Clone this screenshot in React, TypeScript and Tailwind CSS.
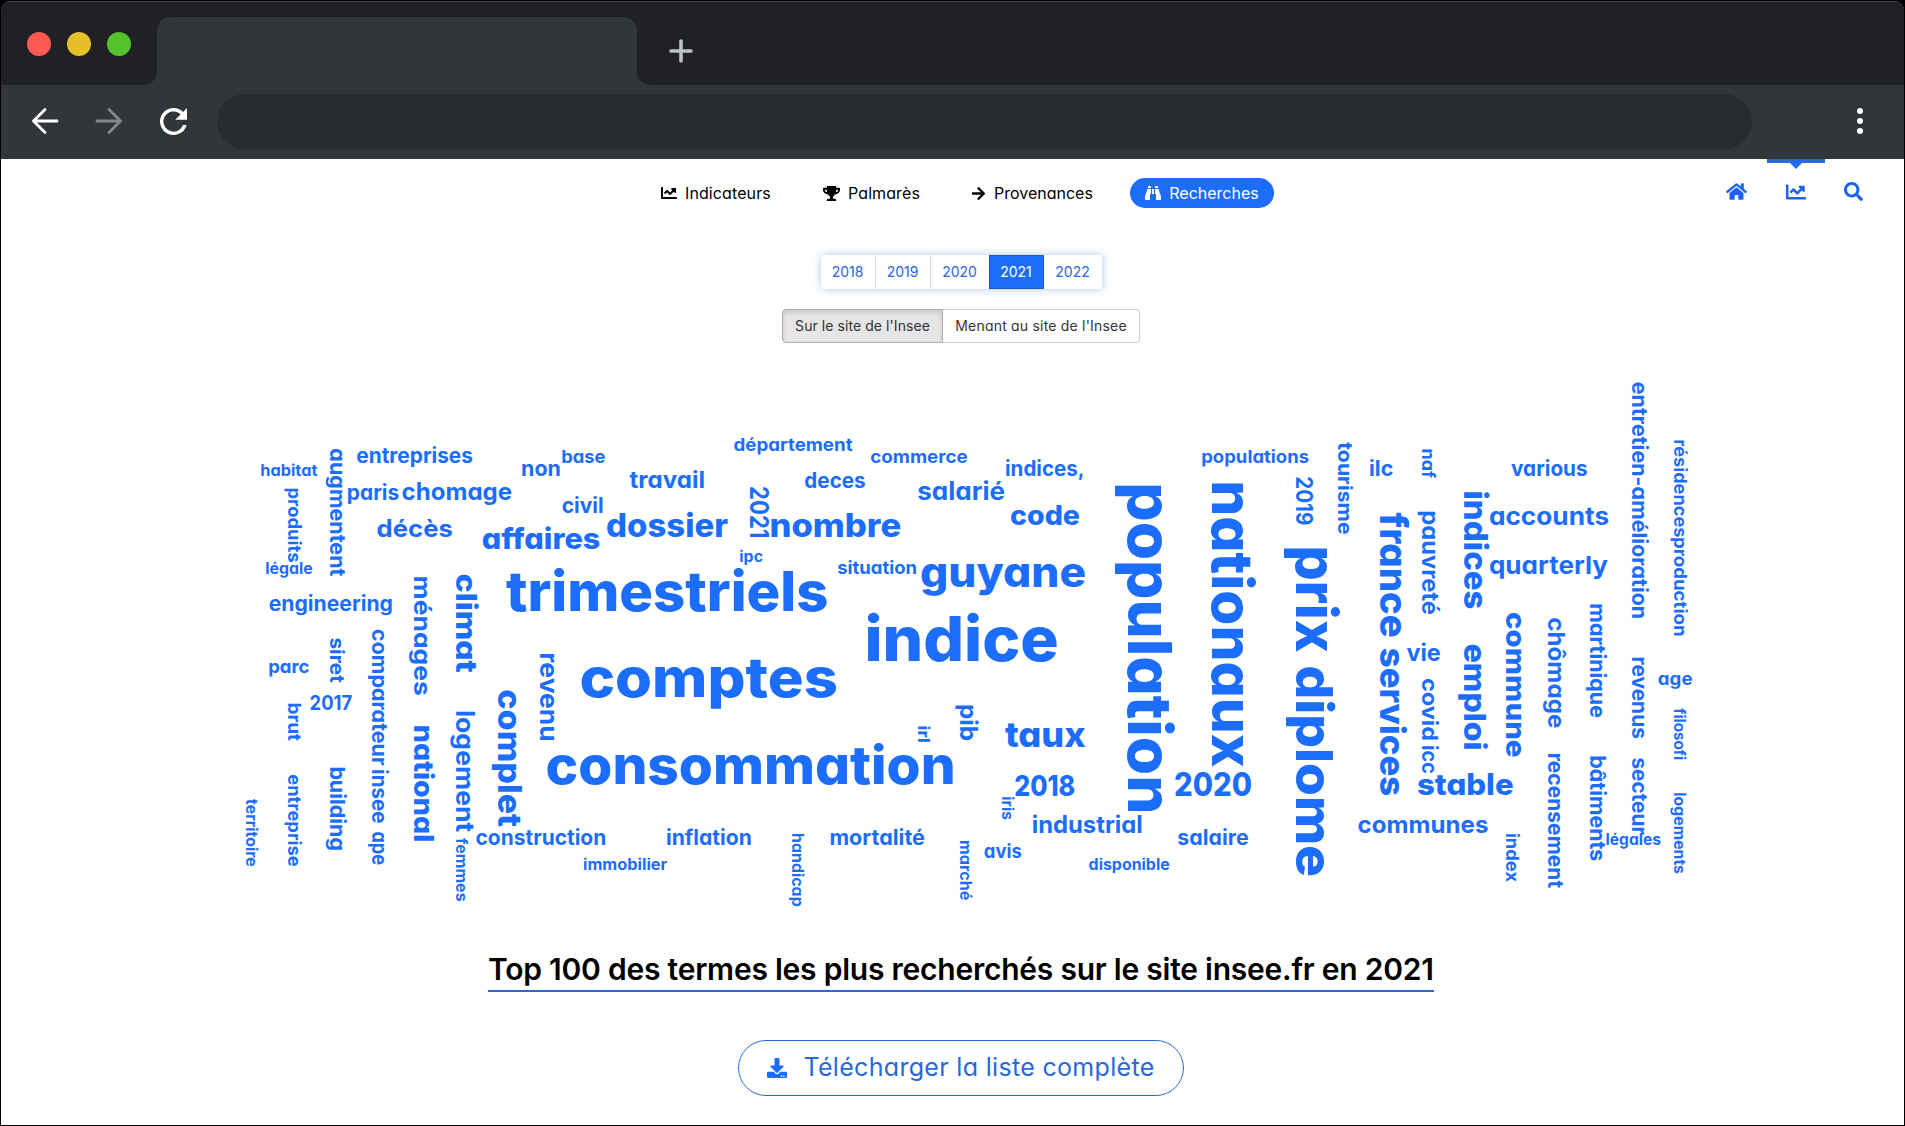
import React from "react";
import { FaArrowRight, FaBinoculars, FaChartLine, FaDownload, FaHome, FaSearch, FaTrophy } from "react-icons/fa";

type Word = [text: string, size: number, start: number, end: number, baseline: number];

const horizontal: Word[] = [
  ["entreprises", 21, 357.3, 472, 462.7],
  ["habitat", 16, 261, 316.7, 476],
  ["paris", 21, 347.7, 398.3, 500],
  ["chomage", 24, 402.7, 511, 500],
  ["non", 21, 522, 560, 475.7],
  ["base", 18, 562, 604.7, 462.7],
  ["civil", 21, 562.7, 602.7, 512.7],
  ["décès", 24, 377.7, 451.7, 536.7],
  ["affaires", 29, 483, 599, 549.3],
  ["dossier", 32, 607.5, 726.7, 536.7],
  ["légale", 15.5, 266, 312, 574.3],
  ["engineering", 21, 269.7, 392, 610.7],
  ["trimestriels", 55, 508.5, 826, 611],
  ["parc", 18.5, 269, 308.7, 673.3],
  ["2017", 20, 310.5, 351.3, 710],
  ["construction", 21, 476.5, 605.3, 844.7],
  ["immobilier", 15.5, 583.7, 666.5, 870],
  ["travail", 23, 630.5, 704, 488],
  ["département", 18, 734.3, 851.7, 451],
  ["commerce", 18, 871, 967, 463],
  ["deces", 21, 805.3, 864.7, 488],
  ["salarié", 25, 918.3, 1004, 500],
  ["indices,", 21, 1006, 1083.7, 475.7],
  ["code", 27, 1011.3, 1078.7, 524.7],
  ["nombre", 32, 771, 899.7, 536.7],
  ["ipc", 15.5, 740, 762.3, 562],
  ["situation", 18, 838, 916.3, 573.7],
  ["guyane", 41, 921.8, 1084.2, 586.7],
  ["indice", 62, 867.2, 1056, 660.7],
  ["comptes", 55, 582, 835.5, 696.7],
  ["taux", 35, 1006.5, 1084, 746.7],
  ["consommation", 53, 548, 953.2, 784],
  ["2018", 28, 1015.5, 1074, 796],
  ["industrial", 24, 1032.8, 1141.7, 832.7],
  ["inflation", 21, 666.9, 750.9, 844.7],
  ["mortalité", 21, 830.4, 924, 844.7],
  ["avis", 19, 984.7, 1021, 858],
  ["disponible", 15.5, 1089.3, 1169, 870],
  ["populations", 18, 1202, 1308.3, 463],
  ["ilc", 21, 1370, 1392.3, 475.7],
  ["2020", 32, 1175.5, 1250.5, 795.7],
  ["salaire", 21, 1178.3, 1247.7, 845],
  ["communes", 24, 1358.7, 1487.3, 832.7],
  ["various", 21, 1512, 1586.7, 476],
  ["accounts", 24.5, 1490, 1608, 524.7],
  ["quarterly", 24.5, 1490, 1607, 573.7],
  ["vie", 24, 1407.5, 1439.7, 660.7],
  ["stable", 29.5, 1418.3, 1512.3, 795.3],
  ["age", 18, 1658.7, 1691.7, 684.7],
  ["légales", 15.5, 1606.3, 1660.3, 845],
];

const vertical: Word[] = [
  ["augmentent", 21, 449.3, 575.5, 330],
  ["produits", 18.5, 488.3, 561.7, 288],
  ["ménages", 24, 576.7, 694.7, 414.3],
  ["climat", 29, 575, 671.5, 456],
  ["siret", 20, 638.3, 682, 330],
  ["comparateur", 20.5, 630, 764.7, 371.7],
  ["insee", 20.5, 770, 822.7, 371.7],
  ["ape", 20.5, 832.3, 864.3, 371.7],
  ["revenu", 25, 653.3, 740.7, 540],
  ["brut", 18, 703.3, 740.2, 288],
  ["entreprise", 18, 775, 866, 288],
  ["building", 20.5, 767.3, 850, 330],
  ["national", 27, 726, 841, 414.3],
  ["logement", 25, 711, 831.2, 456],
  ["complet", 32, 690.7, 825.7, 498],
  ["femmes", 15.5, 838.8, 901, 456],
  ["territoire", 15.5, 799.8, 866, 246],
  ["2021", 25, 487.2, 537.5, 750],
  ["irl", 16.5, 726.3, 742, 917.7],
  ["pib", 24, 705, 740, 960],
  ["iris", 15.5, 797, 819.3, 1001.7],
  ["handicap", 15.5, 833.7, 906, 791.6],
  ["marché", 15.5, 840.7, 899.7, 960],
  ["2019", 22.5, 477.2, 524.3, 1296],
  ["tourisme", 20, 443.2, 533.7, 1338.3],
  ["population", 61, 485, 811.7, 1127.7],
  ["nationaux", 56, 482.7, 765, 1211.7],
  ["prix", 56, 548, 650, 1296],
  ["diplome", 51, 667.7, 874.7, 1296],
  ["france", 38, 514.3, 636, 1380],
  ["services", 35, 649.3, 794.7, 1380],
  ["naf", 17, 449.3, 477.5, 1421.7],
  ["pauvreté", 22.5, 511.3, 614, 1421.7],
  ["indices", 32.5, 492, 608, 1464],
  ["entretien-amélioration", 20.5, 382.7, 618.3, 1631.7],
  ["résidences", 17.5, 440, 536.7, 1673.7],
  ["production", 17.5, 537.7, 635.7, 1673.7],
  ["covid", 22, 679, 740, 1421.7],
  ["icc", 20.5, 746, 773, 1421.7],
  ["emploi", 30, 645, 749.3, 1464],
  ["commune", 27.5, 613.3, 756.3, 1506],
  ["chômage", 23, 618.3, 727.3, 1547.7],
  ["martinique", 21, 604.3, 717, 1589.7],
  ["revenus", 20.5, 657.3, 738, 1631.7],
  ["filosofi", 15.5, 709, 759.3, 1673.7],
  ["recensement", 21, 753.7, 887.2, 1547.7],
  ["bâtiments", 21, 756.3, 860.3, 1589.7],
  ["secteur", 20.5, 758.3, 834, 1631.7],
  ["logements", 15.5, 793, 873.3, 1673.7],
  ["index", 18, 833.7, 881.2, 1506],
];

/** Side bearing of the glyphs, as a share of the font size. */
const BEARING = 0.045;

/** Large words carry a heavier weight than the small ones. */
const weightOf = (size: number) => (size >= 27 ? 800 : 700);

function WordCloud() {
  return (
    <svg
      viewBox="200 370 1510 550"
      className="h-[550px] w-[1510px] fill-[#1c6dfc] font-bold [font-feature-settings:'cv11']"
      role="img"
      aria-label="Nuage de mots"
    >
      {horizontal.map(([text, size, start, end, base]) => (
        <text
          key={"h" + text}
          x={start - size * BEARING}
          y={base}
          fontSize={size}
          fontWeight={weightOf(size)}
          textLength={end - start + size * BEARING * 2}
          lengthAdjust="spacingAndGlyphs"
        >
          {text}
        </text>
      ))}
      {vertical.map(([text, size, start, end, base]) => (
        <text
          key={"v" + text}
          transform={`translate(${base} ${start - size * BEARING}) rotate(90)`}
          fontSize={size}
          fontWeight={weightOf(size)}
          textLength={end - start + size * BEARING * 2}
          lengthAdjust="spacingAndGlyphs"
        >
          {text}
        </text>
      ))}
    </svg>
  );
}

function BrowserChrome() {
  return (
    <header className="h-[158px] shrink-0 bg-[#323639]">
      <div className="flex h-[84px] bg-[#323639]">
        <div className="flex w-[156px] items-start gap-4 rounded-br-[14px] border-t border-[#4a4b4d] bg-[#202124] pt-[30px] pl-[26px]">
          <span className="size-6 rounded-full bg-[#ff5a52]" />
          <span className="size-6 rounded-full bg-[#e6c029]" />
          <span className="size-6 rounded-full bg-[#54c22b]" />
        </div>
        <div className="w-[480px] border-t border-[#4a4b4d] bg-[#202124] pt-[15px]">
          <div className="h-full rounded-t-[14px] bg-[#323639]" />
        </div>
        <div className="flex-1 rounded-bl-[14px] border-t border-[#4a4b4d] bg-[#202124] pt-[37px] pl-[32px]">
          <svg viewBox="0 0 24 24" className="size-6" stroke="#bdc1c6" strokeWidth="3.6" strokeLinecap="round">
            <path d="M12 2v20M2 12h20" />
          </svg>
        </div>
      </div>
      <div className="flex h-[74px] items-center pr-[41px] pb-[2px] pl-[30px]">
        <svg viewBox="0 0 28 28" className="size-7" fill="none" stroke="#fff" strokeWidth="2.8" strokeLinecap="round" strokeLinejoin="round">
          <path d="M26 14H2.500M14 2.500 2.500 14 14 25.500" />
        </svg>
        <svg viewBox="0 0 28 28" className="ml-9 size-7" fill="none" stroke="#85888a" strokeWidth="2.8" strokeLinecap="round" strokeLinejoin="round">
          <path d="M2 14h23.500M14 2.500 25.500 14 14 25.500" />
        </svg>
        <svg viewBox="4 4 16 16" className="ml-[37px] size-[27px]" fill="#fff">
          <path d="M17.650 6.350A7.958 7.958 0 0 0 12 4a8 8 0 1 0 7.730 10h-2.080A6 6 0 1 1 12 6c1.660 0 3.140.69 4.220 1.780L13 11h7V4l-2.350 2.350z" />
        </svg>
        <div className="ml-[30px] h-[55px] w-[1535px] rounded-full bg-[#282c2e]" />
        <div className="ml-auto flex flex-col gap-1">
          <span className="size-1.5 rounded-full bg-white" />
          <span className="size-1.5 rounded-full bg-white" />
          <span className="size-1.5 rounded-full bg-white" />
        </div>
      </div>
    </header>
  );
}

function TopNav() {
  return (
    <nav className="flex h-[68px] text-[16px] leading-6 text-black">
      <div className="mt-[19px] flex h-[30px] w-full items-center">
        <a className="ml-[660px] flex w-[162px] items-center gap-2 tracking-[0.1px]">
          <FaChartLine className="size-4" />
          <span>Indicateurs</span>
        </a>
        <a className="flex w-[148px] items-center gap-2 tracking-[0.1px]">
          <FaTrophy className="size-[17px]" />
          <span>Palmarès</span>
        </a>
        <a className="flex w-[159px] items-center gap-2">
          <FaArrowRight className="size-[15px]" />
          <span>Provenances</span>
        </a>
        <a className="flex h-[30px] w-[144px] items-center justify-center gap-2 rounded-full bg-[#1c6dfc] text-white">
          <FaBinoculars className="size-4" />
          <span>Recherches</span>
        </a>
        <div className="mb-[3px] ml-[452px] flex w-[137px] items-center justify-between text-[#1c62f0]">
          <FaHome className="size-[21px]" />
          <div className="relative">
            <span className="absolute -top-[23px] -left-[19px] h-1 w-[58px] bg-[#2868dc]" />
            <span className="absolute -top-[20px] left-[3px] border-x-[7px] border-t-[7px] border-x-transparent border-t-[#1c6dfc]" />
            <FaChartLine className="size-5" />
          </div>
          <FaSearch className="size-[19px]" />
        </div>
      </div>
    </nav>
  );
}

export default function App() {
  return (
    <div className="h-[1126px] w-[1905px] overflow-hidden bg-black p-px font-['Inter',sans-serif] [font-feature-settings:'cv11']">
      <div className="flex h-full flex-col overflow-hidden rounded-t-[10px] bg-white">
        <BrowserChrome />
        <TopNav />
        <main className="flex flex-1 flex-col items-center">
          <div className="mt-[28px] ml-[17px] flex h-[34px] rounded-[3px] text-[14px] leading-[33px] text-[#2868dc] shadow-[0_0_8px_rgba(40,110,200,0.4)]">
            <span className="w-[54px] text-center">2018</span>
            <span className="w-[55px] border-l border-[#d9dee6] text-center">2019</span>
            <span className="w-[59px] border-l border-[#d9dee6] text-center">2020</span>
            <span className="w-[55px] border border-[#1a5ad0] bg-[#1c6dfc] text-center leading-[32px] text-white">2021</span>
            <span className="w-[58px] text-center">2022</span>
          </div>
          <div className="mt-[20px] ml-[17px] flex h-[34px] w-[358px] text-[14px] leading-[32px] text-[#333]">
            <span className="w-[161px] rounded-l-[4px] border border-[#adadad] bg-[#e6e6e6] text-center tracking-[0.07px] shadow-[inset_0_3px_5px_rgba(0,0,0,0.125)]">
              Sur le site de l'Insee
            </span>
            <span className="flex-1 rounded-r-[4px] border border-l-0 border-[#ccc] text-center tracking-[0.2px]">
              Menant au site de l'Insee
            </span>
          </div>
          <div className="mt-[27px] flex w-full pl-[199px]">
            <WordCloud />
          </div>
          <h1 className="mt-[24px] ml-[17px] h-[48px] w-[946px] border-b-2 border-[#2868dc] text-[30px] leading-[50px] font-semibold tracking-[-0.23px] whitespace-nowrap text-black">
            Top 100 des termes les plus recherchés sur le site insee.fr en 2021
          </h1>
          <button className="mt-[48px] ml-[17px] flex h-[56px] w-[446px] items-center justify-center gap-4 rounded-full border border-[#2868dc] text-[25px] tracking-[0.32px] whitespace-nowrap text-[#2868dc]">
            <FaDownload className="size-[20px] text-[#1c6dfc]" />
            <span>Télécharger la liste complète</span>
          </button>
        </main>
      </div>
    </div>
  );
}
